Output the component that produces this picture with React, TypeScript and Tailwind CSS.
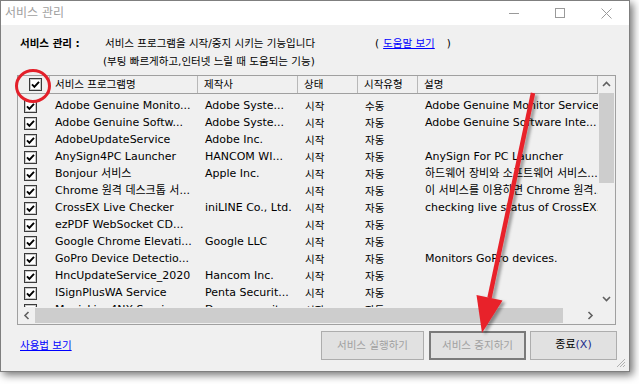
import React from "react";

const rows: string[][] = [
  ["Adobe Genuine Monito...", "Adobe Syste...", "시작", "수동", "Adobe Genuine Monitor Service"],
  ["Adobe Genuine Softw...", "Adobe Syste...", "시작", "자동", "Adobe Genuine Software Inte..."],
  ["AdobeUpdateService", "Adobe Inc.", "시작", "자동", ""],
  ["AnySign4PC Launcher", "HANCOM WI...", "시작", "자동", "AnySign For PC Launcher"],
  ["Bonjour 서비스", "Apple Inc.", "시작", "자동", "하드웨어 장비와 소프트웨어 서비스..."],
  ["Chrome 원격 데스크톱 서...", "", "시작", "자동", "이 서비스를 이용하면 Chrome 원격..."],
  ["CrossEX Live Checker", "iniLINE Co., Ltd.", "시작", "자동", "checking live status of CrossEX."],
  ["ezPDF WebSocket CD...", "", "시작", "자동", ""],
  ["Google Chrome Elevati...", "Google LLC", "시작", "자동", ""],
  ["GoPro Device Detectio...", "", "시작", "자동", "Monitors GoPro devices."],
  ["HncUpdateService_2020", "Hancom Inc.", "시작", "자동", ""],
  ["ISignPlusWA Service", "Penta Securit...", "시작", "자동", ""],
  ["MagicLine4NX Service", "Dreamsecurity...", "시작", "자동", ""],
];

function Check() {
  return (
    <svg width="13" height="13" viewBox="0 0 13 13" className="shrink-0">
      <rect x="0.5" y="0.5" width="12" height="12" fill="#fff" stroke="#3a3a3a" />
      <rect x="1.5" y="1.5" width="10" height="10" fill="none" stroke="#c8c8c8" />
      <path d="M3 6.4 L5.4 8.9 L10 3.9" fill="none" stroke="#000" strokeWidth="1.9" />
    </svg>
  );
}

function Chevron({ dir }: { dir: "up" | "down" | "left" | "right" }) {
  const d =
    dir === "up"
      ? "M2 6 L5.5 2.5 L9 6"
      : dir === "down"
      ? "M2 3 L5.5 6.5 L9 3"
      : dir === "left"
      ? "M6.5 1 L3 4.5 L6.5 8"
      : "M3.5 1 L7 4.5 L3.5 8";
  const w = dir === "up" || dir === "down" ? 11 : 10;
  const h = 9;
  return (
    <svg width={w} height={h} viewBox={`0 0 ${w} ${h}`}>
      <path d={d} fill="none" stroke="#606060" strokeWidth="1.6" />
    </svg>
  );
}

export default function App() {
  return (
    <div className="relative w-[639px] h-[384px] bg-white overflow-hidden font-['DejaVu_Sans','Noto_Sans_CJK_KR',sans-serif] text-black">
      <div className="w-[630px] h-[372px] border border-[#7f7f7f] bg-[#f0f0f0] shadow-[3px_3px_8px_rgba(0,0,0,0.55)] flex flex-col">
        {/* title bar */}
        <div className="h-[24px] bg-white flex items-center shrink-0">
          <span className="pl-[4px] text-[12px] text-[#a0a0a0] leading-none">서비스 관리</span>
          <div className="ml-auto flex h-full">
            <div className="w-[46px] h-full flex items-center justify-center">
              <svg width="10" height="10" viewBox="0 0 10 10">
                <path d="M0 5.5 H10" stroke="#9a9a9a" strokeWidth="1" />
              </svg>
            </div>
            <div className="w-[46px] h-full flex items-center justify-center">
              <svg width="10" height="10" viewBox="0 0 10 10">
                <rect x="0.5" y="0.5" width="9" height="9" fill="none" stroke="#9a9a9a" strokeWidth="1" />
              </svg>
            </div>
            <div className="w-[46px] h-full flex items-center justify-center">
              <svg width="11" height="11" viewBox="0 0 11 11">
                <path d="M0.5 0.5 L10.5 10.5 M10.5 0.5 L0.5 10.5" stroke="#9a9a9a" strokeWidth="1" />
              </svg>
            </div>
          </div>
        </div>

        {/* content */}
        <div className="flex-1 flex flex-col relative">
          <div className="mt-[10px] h-[18px] flex items-center text-[10.5px] whitespace-nowrap">
            <span className="ml-[19px] w-[85px] font-bold">서비스 관리 :</span>
            <span className="w-[270px]">서비스 프로그램을 시작/중지 시키는 기능입니다</span>
            <span>(</span>
            <span className="ml-[4px] text-[#0000ff] underline">도움말 보기</span>
            <span className="ml-[12px]">)</span>
          </div>
          <div className="h-[18px] flex items-center text-[10.5px] whitespace-nowrap">
            <span className="ml-[102px]">(부팅 빠르게하고,인터넷 느릴 때 도움되는 기능)</span>
          </div>

          {/* list view */}
          <div className="mt-[4px] ml-[16px] w-[599px] h-[250px] border border-[#a0a0a0] flex flex-col bg-[#f0f0f0]">
            <div className="flex h-[231px]">
              <div className="w-[580px] h-full overflow-hidden flex flex-col">
                {/* header */}
                <div className="h-[18px] shrink-0 flex border-b border-[#a0a0a0] text-[10.5px] whitespace-nowrap">
                  <div className="w-[32px] h-full border-r border-[#b8b8b8] flex items-center pl-[11px]">
                    <Check />
                  </div>
                  <div className="w-[148px] h-full border-r border-[#b8b8b8] flex items-center pl-[5px]">서비스 프로그램명</div>
                  <div className="w-[100px] h-full border-r border-[#b8b8b8] flex items-center pl-[6px]">제작사</div>
                  <div className="w-[60px] h-full border-r border-[#b8b8b8] flex items-center pl-[6px]">상태</div>
                  <div className="w-[60px] h-full border-r border-[#b8b8b8] flex items-center pl-[6px]">시작유형</div>
                  <div className="flex-1 h-full border-r border-[#b8b8b8] flex items-center pl-[6px]">설명</div>
                </div>
                {/* rows */}
                <div className="pt-[4px] flex flex-col">
                  {rows.map((r, i) => (
                    <div key={i} className="h-[17px] shrink-0 flex items-center text-[11px] whitespace-nowrap">
                      <div className="w-[32px] pl-[6px] flex items-center">
                        <Check />
                      </div>
                      <div className="w-[148px] pl-[5px] overflow-hidden">{r[0]}</div>
                      <div className="w-[100px] pl-[7px] overflow-hidden">{r[1]}</div>
                      <div className="w-[60px] pl-[7px] text-[10.5px] overflow-hidden">{r[2]}</div>
                      <div className="w-[60px] pl-[7px] text-[10.5px] overflow-hidden">{r[3]}</div>
                      <div className="flex-1 pl-[7px] overflow-hidden">{r[4]}</div>
                    </div>
                  ))}
                </div>
              </div>
              {/* vertical scrollbar */}
              <div className="w-[17px] h-full flex flex-col bg-[#f0f0f0]">
                <div className="h-[17px] flex items-center justify-center">
                  <Chevron dir="up" />
                </div>
                <div className="mx-[1px] h-[90px] bg-[#cdcdcd]" />
                <div className="flex-1" />
                <div className="h-[17px] flex items-center justify-center">
                  <Chevron dir="down" />
                </div>
              </div>
            </div>
            {/* horizontal scrollbar */}
            <div className="flex h-[17px]">
              <div className="w-[580px] h-full flex bg-[#f0f0f0]">
                <div className="w-[17px] h-full flex items-center justify-center">
                  <Chevron dir="left" />
                </div>
                <div className="w-[528px] my-[1px] bg-[#cdcdcd]" />
                <div className="flex-1" />
                <div className="w-[17px] h-full flex items-center justify-center">
                  <Chevron dir="right" />
                </div>
              </div>
              <div className="w-[17px] h-full bg-[#f0f0f0]" />
            </div>
          </div>

          {/* bottom */}
          <div className="mt-[6px] flex items-center h-[29px]">
            <span className="ml-[19px] text-[10.5px] text-[#0000ff] underline">사용법 보기</span>
            <div className="ml-auto flex gap-[4px] mr-[12px]">
              <div className="w-[103px] h-[29px] border border-[#adadad] bg-[#e1e1e1] flex items-center justify-center text-[10.5px] text-[#a0a0a0]">
                서비스 실행하기
              </div>
              <div className="ml-[1px] w-[97px] h-[29px] border-2 border-[#7a7a7a] bg-[#e1e1e1] flex items-center justify-center text-[10.5px] text-[#a0a0a0]">
                서비스 중지하기
              </div>
              <div className="w-[87px] h-[29px] border border-[#adadad] bg-[#e1e1e1] flex items-center justify-center text-[11px]">
                종료<span className="text-[#1c2c8c]">(X)</span>
              </div>
            </div>
          </div>

          {/* resize grip */}
          <svg className="absolute right-[3px] bottom-[3px]" width="10" height="10" viewBox="0 0 10 10">
            <path d="M9 1 L1 9 M9 4 L4 9 M9 7 L7 9" stroke="#b0b0b0" strokeWidth="1" />
          </svg>
        </div>
      </div>

      {/* annotations */}
      <svg className="absolute inset-0 pointer-events-none" width="639" height="384" viewBox="0 0 639 384">
        <defs>
          <filter id="sh" x="-20%" y="-20%" width="140%" height="140%">
            <feDropShadow dx="3" dy="2" stdDeviation="1.6" floodColor="#000" floodOpacity="0.35" />
          </filter>
        </defs>
        <ellipse cx="33" cy="86" rx="16.5" ry="15.5" fill="none" stroke="#e3202a" strokeWidth="3" />
        <g filter="url(#sh)">
          <line x1="533" y1="93" x2="489.5" y2="298" stroke="#e8212c" strokeWidth="4.5" />
          <polygon points="482,333 502.5,300.5 476.5,295" fill="#e8212c" />
        </g>
      </svg>
    </div>
  );
}
